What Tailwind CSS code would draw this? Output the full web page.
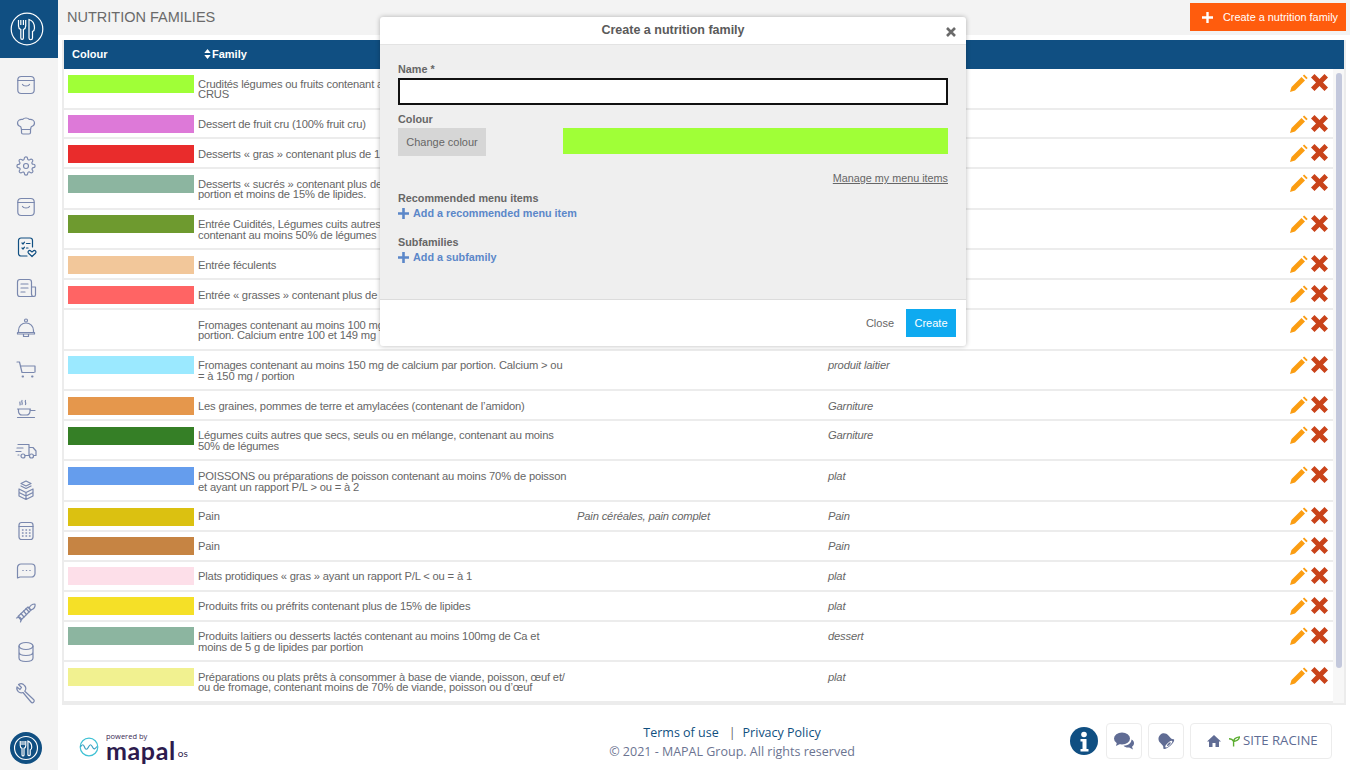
<!DOCTYPE html>
<html lang="en">
<head>
  <meta charset="UTF-8" />
  <meta name="viewport" content="width=device-width, initial-scale=1.0" />
  <title>Nutrition families</title>
  <script src="https://cdn.jsdelivr.net/npm/@tailwindcss/browser@4"></script>
</head>
<body class="bg-white text-[#666] font-['Liberation_Sans',sans-serif] overflow-hidden">
  <div class="relative flex w-[1350px] h-[770px] overflow-hidden">

    <!-- sidebar -->
    <aside class="w-[58px] h-full shrink-0 bg-[#f3f3f3] flex flex-col items-center">
      <div class="w-full h-[58px] shrink-0 bg-[#104f82] flex items-center justify-center pr-[4px]">
        <svg width="34" height="34" viewBox="0 0 34 34" fill="none" stroke="#fff" stroke-width="1.200">
          <circle cx="17" cy="17" r="15.800" />
          <path d="M8.500 8v6c0 2 1 3 2.300 3.500V26a1.300 1.300 0 0 0 2.600 0V17.500c1.300-.5 2.300-1.500 2.300-3.500V8M10.800 8v5M13.400 8v5" />
          <path d="M19 7.500c3.500 1 5.500 4 5.500 8.500 0 2-.7 3-2 3.500V26a1.700 1.700 0 0 1-3.500 0z" />
        </svg>
      </div>
      <div class="flex flex-col items-center gap-[16.500px] mt-[15px] mr-[6px] text-[#7a88ae]">
        <svg class="block" width="24" height="24" viewBox="0 0 24 24" fill="none" stroke="currentColor" stroke-width="1.200" stroke-linejoin="round" stroke-linecap="round"><rect x="3.800" y="3.500" width="16.400" height="17" rx="3.500"/><path d="M3.800 7.500h16.400M8.500 11.500c1 2 6 2 7 0"/></svg>
        <svg class="block" width="24" height="24" viewBox="0 0 24 24" fill="none" stroke="currentColor" stroke-width="1.200" stroke-linejoin="round" stroke-linecap="round"><path d="M7.500 15.500 6.800 12.800C4.500 12 3.500 10.500 3.500 9c0-2.500 2.500-4 5-3.500C9.500 4.500 10.500 4 12 4s2.500.5 3.500 1.500c2.500-.5 5 1 5 3.500 0 1.500-1 3-3.300 3.800l-.7 2.700z"/><path d="M7.500 15.500v3a1.500 1.500 0 0 0 1.500 1.500h6a1.500 1.500 0 0 0 1.500-1.500v-3"/></svg>
        <svg class="block" width="24" height="24" viewBox="-2.500 -2.500 29 29" fill="none" stroke="currentColor" stroke-width="1.400" stroke-linejoin="round" stroke-linecap="round"><circle cx="12" cy="12" r="3"/><path d="M19.400 15a1.650 1.650 0 0 0 .33 1.820l.06.06a2 2 0 1 1-2.830 2.830l-.06-.06a1.650 1.650 0 0 0-2.820 1.170V21a2 2 0 1 1-4 0v-.09a1.650 1.650 0 0 0-2.820-1.170l-.06.06a2 2 0 1 1-2.830-2.830l.06-.06a1.650 1.650 0 0 0-1.170-2.820H3a2 2 0 1 1 0-4h.09a1.650 1.650 0 0 0 1.170-2.820l-.06-.06a2 2 0 1 1 2.830-2.830l.06.06a1.650 1.650 0 0 0 2.820-1.170V3a2 2 0 1 1 4 0v.09a1.650 1.650 0 0 0 2.820 1.170l.06-.06a2 2 0 1 1 2.830 2.830l-.06.06a1.650 1.650 0 0 0 1.170 2.820H21a2 2 0 1 1 0 4h-.09a1.650 1.650 0 0 0-1.510 1z"/></svg>
        <svg class="block" width="24" height="24" viewBox="0 0 24 24" fill="none" stroke="currentColor" stroke-width="1.200" stroke-linejoin="round" stroke-linecap="round"><rect x="3.800" y="3.500" width="16.400" height="17" rx="3.500"/><path d="M3.800 7.500h16.400M8.500 11.500c1 2 6 2 7 0"/></svg>
        <svg class="block" width="24" height="24" viewBox="0 0 24 24" fill="none" stroke="#104f82" stroke-width="1.200" stroke-linejoin="round" stroke-linecap="round"><path d="M13 21H7a2.500 2.500 0 0 1-2.500-2.500v-13A2.500 2.500 0 0 1 7 3h9a2.500 2.500 0 0 1 2.500 2.500V12"/><path d="M8 8l1 1 1.500-1.800M8 13l1 1 1.500-1.800M12.500 8.500H16M12.500 13H14"/><path d="M18 21.500l-3.500-3.300c-1.500-1.500.8-3.700 2.300-2.200l1.200 1 1.200-1c1.500-1.500 3.800.7 2.300 2.200z"/></svg>
        <svg class="block" width="24" height="24" viewBox="0 0 24 24" fill="none" stroke="currentColor" stroke-width="1.200" stroke-linejoin="round" stroke-linecap="round"><path d="M18 20.500H6A2.500 2.500 0 0 1 3.500 18V6A2.500 2.500 0 0 1 6 3.500h9A2.500 2.500 0 0 1 17.500 6v12a2.500 2.500 0 0 0 2.500 2.500 1.800 1.800 0 0 0 1.500-1.800V11h-4"/><path d="M7 8h7M7 12h7M7 16h4"/></svg>
        <svg class="block" width="24" height="24" viewBox="0 0 24 24" fill="none" stroke="currentColor" stroke-width="1.200" stroke-linejoin="round" stroke-linecap="round"><circle cx="12" cy="4.500" r="1.500"/><path d="M4.500 16.500v-2a7.500 7.500 0 0 1 15 0v2zM3.500 16.500h17v1.500h-17zM9.500 18v2.500h5V18"/></svg>
        <svg class="block" width="24" height="24" viewBox="0 0 24 24" fill="none" stroke="currentColor" stroke-width="1.200" stroke-linejoin="round" stroke-linecap="round"><path d="M3 5h2.500l2.500 10.500h12M6.300 9h14.700v6"/><path d="M8.500 19.500h.6M18 19.500h.6" stroke-width="1.800"/></svg>
        <svg class="block" width="24" height="24" viewBox="0 0 24 24" fill="none" stroke="currentColor" stroke-width="1.200" stroke-linejoin="round" stroke-linecap="round"><path d="M3.500 20.500h17M4.500 12h11.500v2.500a3.500 3.500 0 0 1-3.500 3.500H8a3.500 3.500 0 0 1-3.500-3.500zM3.500 12h13M16 13.500h5M8 3.500c-1 1.500 1 2 0 4M11.500 3.500c-1 1.500 1 2 0 4M6 5c-.7 1 .7 1.500 0 3"/></svg>
        <svg class="block" width="24" height="24" viewBox="0 0 24 24" fill="none" stroke="currentColor" stroke-width="1.200" stroke-linejoin="round" stroke-linecap="round"><path d="M4 6.500h11v11h-4M15 9.500h4l3 3.500v4.500h-2.500M3 10h6M2 13.500h5M4 17h1"/><circle cx="9" cy="18" r="2"/><circle cx="17.500" cy="18" r="2"/></svg>
        <svg class="block" width="24" height="24" viewBox="0 0 24 24" fill="none" stroke="currentColor" stroke-width="1.200" stroke-linejoin="round" stroke-linecap="round"><path d="M12 3l5 2.500-5 2.500-5-2.500zM7 8l5 2.500L17 8M5 11l7 3.500 7-3.500M5 11v7l7 3.500 7-3.500v-7M12 14.500v7M5 14.500l7 3.500 7-3.500"/></svg>
        <svg class="block" width="24" height="24" viewBox="0 0 24 24" fill="none" stroke="currentColor" stroke-width="1.200" stroke-linejoin="round" stroke-linecap="round"><rect x="5" y="3.500" width="14" height="17" rx="2.500"/><path d="M5 7.500h14"/><path d="M8.500 11h.5M12 11h.5M15.500 11h.5M8.500 14h.5M12 14h.5M15.500 14h.5M8.500 17h.5M12 17h.5M15.500 17h.5" stroke-width="1.500"/></svg>
        <svg class="block" width="24" height="24" viewBox="0 0 24 24" fill="none" stroke="currentColor" stroke-width="1.200" stroke-linejoin="round" stroke-linecap="round"><path d="M7 5h10.500a3.500 3.500 0 0 1 3.500 3.500v6a3.500 3.500 0 0 1-3.500 3.500H6l-2.500 1V8.500A3.500 3.500 0 0 1 7 5z"/><path d="M8.800 11.500h.4M12.300 11.500h.4M15.800 11.500h.4"/></svg>
        <svg class="block" width="24" height="24" viewBox="0 0 24 24" fill="none" stroke="currentColor" stroke-width="1.200" stroke-linejoin="round" stroke-linecap="round"><path d="M15 8.500c1-3 3.500-4.500 6-4.500 .5 2.500-1 5-4 6z"/><path d="M4 16.500 7 20l10-10-3-3z"/><path d="M7 13.500l3 3.500M9.500 11l3 3.500M12 8.500l3 3.500"/><path d="M2.500 18l3-1 2 2-1 3"/></svg>
        <svg class="block" width="24" height="24" viewBox="0 0 24 24" fill="none" stroke="currentColor" stroke-width="1.200" stroke-linejoin="round" stroke-linecap="round"><ellipse cx="12" cy="6" rx="7" ry="3.500"/><path d="M5 6v12c0 2 3 3.500 7 3.500s7-1.500 7-3.500V6M5 12c0 2 3 3.500 7 3.500s7-1.500 7-3.500"/></svg>
        <svg class="block" width="24" height="24" viewBox="0 0 24 24" fill="none" stroke="currentColor" stroke-width="1.200" stroke-linejoin="round" stroke-linecap="round"><path d="M10.500 4.500a4.500 4.500 0 0 0-6-1l3 3-1.500 2-3-2.500a4.500 4.500 0 0 0 6 5.500l8 9.500a1.800 1.800 0 0 0 2.800-2.300l-9-8.500a4.500 4.500 0 0 0-.3-5.700z"/></svg>
      </div>
      <div class="mt-auto mb-[6px] mr-[6px] w-8 h-8 rounded-full bg-[#104f82] flex items-center justify-center">
        <svg width="26" height="26" viewBox="0 0 34 34" fill="none" stroke="#fff" stroke-width="1.500">
          <circle cx="17" cy="17" r="15" />
          <path d="M9.500 8v6c0 2 1 3 2.300 3.500V26a1.300 1.300 0 0 0 2.600 0V17.500c1.300-.5 2.300-1.500 2.300-3.500V8M11.800 8v5M14.400 8v5" />
          <path d="M19.500 8c3 1 5 4 5 8 0 2-.7 3-2 3.500V26a1.700 1.700 0 0 1-3 0z" />
        </svg>
      </div>
    </aside>

    <main class="flex-1 flex flex-col min-w-0">
      <!-- page title -->
      <header class="h-[35px] shrink-0 bg-[#f3f3f3] flex justify-between pl-[9px] pr-[4px]">
        <h1 class="text-[14.500px] leading-[35px] text-[#6a6a6a]">NUTRITION FAMILIES</h1>
        <button class="mt-[3px] w-[156px] h-[28px] bg-[#ff5c0d] text-white text-[10.900px] flex items-center whitespace-nowrap">
          <svg class="ml-[12px] mr-[10px]" width="11" height="11" viewBox="0 0 12 12" fill="#fff"><path d="M4.700 0h2.600v4.700H12v2.600H7.300V12H4.700V7.300H0V4.700h4.700z"/></svg>
          Create a nutrition family
        </button>
      </header>

      <!-- table -->
      <section class="ml-[4px] mr-[4px] mt-[5px] h-[665px] border-x-2 border-b-2 border-[#ececec] relative overflow-hidden">
        <div class="-mx-[2px] h-[29px] pb-[1px] bg-[#104f82] text-white font-bold text-[11px] flex items-center">
          <span class="pl-[10px] w-[142px]">Colour</span>
          <span class="flex items-center gap-[1px]">
            <svg width="7" height="10" viewBox="0 0 7 11" fill="#fff"><path d="M3.500 0 7 4.500H0zM3.500 11 0 6.500h7z"/></svg>Family
          </span>
        </div>
        <div id="rows" class="text-[11.200px] tracking-[-0.17px] leading-[10.700px] pr-[11px]"></div>
        <div class="absolute right-0 top-[29px] bottom-0 w-[11px] bg-[#f7f7f7]">
          <div class="ml-auto mr-[2px] mt-[4px] w-[6px] h-[595px] rounded-full bg-[#c3c8dc]"></div>
        </div>
      </section>

      <!-- footer -->
      <footer class="flex-1 relative">
        <div class="absolute left-[21px] top-[29px] flex items-center gap-[7px]">
          <svg width="20" height="20" viewBox="0 0 20 20" fill="none" stroke="#3fc1d4" stroke-width="1.200"><circle cx="10" cy="10" r="8.800"/><path d="M1.500 10c1.500-3 3-3 4 0s2.500 3 4 0 2.500-3 4 0 2.500 2 4.500-.5" stroke="#3a9fc0"/></svg>
          <div class="flex flex-col -mt-[2px]">
            <div class="text-[7.500px] leading-[8px] text-[#3b2a55] font-['Open_Sans',sans-serif]">powered by</div>
            <div class="flex items-end">
              <span class="text-[25px] leading-[20px] font-bold tracking-[0.600px] text-[#2d1b4e] font-['Lato',sans-serif]">mapal</span>
              <span class="text-[10px] leading-[14px] ml-[2px] text-[#2d1b4e] font-['Lato',sans-serif]">os</span>
            </div>
          </div>
        </div>
        <div class="absolute left-[674px] top-[18px] -translate-x-[50%] text-center font-['Open_Sans',sans-serif] text-[12.500px] whitespace-nowrap">
          <div class="leading-[19px] text-[#10507f]"><span>Terms of use</span><span class="ml-[10px] mr-[7px] text-[#666]">|</span><span>Privacy Policy</span></div>
          <div class="leading-[19px] text-[#6b7491]">© 2021 - MAPAL Group. All rights reserved</div>
        </div>
        <div class="absolute right-[18px] top-[18px] flex items-center gap-[6px]">
          <svg class="mr-[2px]" width="28" height="28" viewBox="0 0 28 28"><circle cx="14" cy="14" r="14" fill="#104f82"/><circle cx="14" cy="7.500" r="2.800" fill="#fff"/><path d="M10.500 12h6v10h2v2.500h-8V22h2v-7.500h-2z" fill="#fff"/></svg>
          <div class="w-[36px] h-[36px] border border-[#ececec] rounded-[4px] flex items-center justify-center">
            <svg width="20" height="18" viewBox="0 0 20 18" fill="#606c94"><ellipse cx="8" cy="6.500" rx="8" ry="6"/><path d="M3 10l-1 4 5-2.500z"/><path d="M17.500 7.500c2 1 2.500 2.500 2.500 3.800 0 1.500-.8 2.700-2 3.500l1 2.700-3.800-2c-2.500.3-4.500-.5-5.700-1.800 4.500 0 8-2.700 8-6.200z"/></svg>
          </div>
          <div class="w-[36px] h-[36px] border border-[#ececec] rounded-[4px] flex items-center justify-center">
            <svg width="18" height="18" viewBox="0 0 18 18"><g transform="rotate(-42 9 9)"><path d="M9 .5c3.500 0 5.500 2.800 5.500 6v4c0 .8 1 1.500 1.500 2.500 0 1.500-3 2.500-7 2.500s-7-1-7-2.500c.5-1 1.500-1.700 1.500-2.500v-4C3.500 3.300 5.500.5 9 .5z" fill="#606c94"/><ellipse cx="9" cy="13.200" rx="4.500" ry="1.500" fill="#fff"/><ellipse cx="9" cy="13.300" rx="2.500" ry=".8" fill="#606c94"/></g></svg>
          </div>
          <div class="w-[142px] h-[36px] border border-[#ececec] rounded-[4px] flex items-center pl-[16px] text-[13.200px] text-[#606c94] font-['Open_Sans',sans-serif] whitespace-nowrap">
            <svg width="14" height="14" viewBox="0 0 14 14" fill="#606c94"><path d="M7 1 0 7.500h2V13h3.500V9h3v4H12V7.500h2z"/></svg>
            <svg class="ml-[8px] mr-[3px]" width="11" height="12" viewBox="0 0 12 12" fill="none" stroke="#5cae32" stroke-width="1.500"><path d="M5 12V7C5 4 7 2 11.500 1.500 11 4 9 6 5 6.500 4 4.500 2.500 3.500 0 3.500"/></svg>
            SITE RACINE
          </div>
        </div>
      </footer>
    </main>

    <!-- modal -->
    <div class="absolute left-[380px] top-[17px] w-[586px] h-[329px] rounded-[3px] bg-white shadow-[0_0_5px_rgba(0,0,0,0.28)] flex flex-col overflow-hidden">
      <div class="h-[28px] shrink-0 border-b border-[#e3e3e3] flex items-center justify-center relative">
        <h2 class="text-[12.500px] font-bold text-[#5a5a5a]">Create a nutrition family</h2>
        <svg class="absolute right-[10px] top-[10px]" width="10" height="10" viewBox="0 0 10 10" stroke="#6a6a6a" stroke-width="2.600"><path d="M1 1l8 8M9 1 1 9"/></svg>
      </div>
      <div class="flex-1 bg-[#efefef] px-[18px] pt-[18px] text-[10.800px] border-b border-[#dcdcdc]">
        <div class="font-bold leading-[13px] text-[#666]">Name *</div>
        <div class="mt-[2px] h-[27px] bg-white border-2 border-[#111]"></div>
        <div class="mt-[8px] font-bold leading-[13px] text-[#666]">Colour</div>
        <div class="mt-[2px] flex justify-between">
          <button class="w-[88px] h-[28px] bg-[#d6d6d6] text-[#666] text-[11px]">Change colour</button>
          <div class="w-[385px] h-[26px] bg-[#a0ff37]"></div>
        </div>
        <div class="mt-[16px] text-right leading-[13px] underline text-[#666]">Manage my menu items</div>
        <div class="mt-[7px] font-bold leading-[13px] text-[#666]">Recommended menu items</div>
        <div class="mt-[2px] flex items-center font-bold leading-[13px] text-[#5b87c9]">
          <svg class="mr-[4px]" width="11" height="11" viewBox="0 0 11 11" fill="#5b87c9"><path d="M4.200 0h2.600v4.200H11v2.600H6.800V11H4.200V6.800H0V4.200h4.200z"/></svg>Add a recommended menu item
        </div>
        <div class="mt-[16px] font-bold leading-[13px] text-[#666]">Subfamilies</div>
        <div class="mt-[2px] flex items-center font-bold leading-[13px] text-[#5b87c9]">
          <svg class="mr-[4px]" width="11" height="11" viewBox="0 0 11 11" fill="#5b87c9"><path d="M4.200 0h2.600v4.200H11v2.600H6.800V11H4.200V6.800H0V4.200h4.200z"/></svg>Add a subfamily
        </div>
      </div>
      <div class="h-[46px] shrink-0 flex items-center justify-end pr-[10px] text-[11px]">
        <span class="text-[#666]">Close</span>
        <button class="ml-[12px] w-[50px] h-[28px] bg-[#0eaaf0] text-white">Create</button>
      </div>
    </div>
  </div>

  <script>
    // [colour, family, recommended, menu item]
    const families = [
      ['#a0ff37', 'Crudités légumes ou fruits contenant au moins 50% de fruits<br>CRUS', '', ''],
      ['#dd79d8', 'Dessert de fruit cru (100% fruit cru)', '', ''],
      ['#e92c2c', 'Desserts « gras » contenant plus de 15% de lipides', '', ''],
      ['#8cb5a0', 'Desserts « sucrés » contenant plus de 20g de glucides par<br>portion et moins de 15% de lipides.', '', ''],
      ['#6e9a2f', 'Entrée Cuidités, Légumes cuits autres que secs, seuls ou<br>contenant au moins 50% de légumes', '', ''],
      ['#f2c79a', 'Entrée féculents', '', ''],
      ['#ff6464', 'Entrée « grasses » contenant plus de 15% de lipides', '', ''],
      ['', 'Fromages contenant au moins 100 mg de calcium par<br>portion. Calcium entre 100 et 149 mg', '', ''],
      ['#9be9ff', 'Fromages contenant au moins 150 mg de calcium par portion. Calcium &gt; ou<br>= à 150 mg / portion', '', 'produit laitier'],
      ['#e5974c', 'Les graines, pommes de terre et amylacées (contenant de l’amidon)', '', 'Garniture'],
      ['#357f26', 'Légumes cuits autres que secs, seuls ou en mélange, contenant au moins<br>50% de légumes', '', 'Garniture'],
      ['#659ded', 'POISSONS ou préparations de poisson contenant au moins 70% de poisson<br>et ayant un rapport P/L &gt; ou = à 2', '', 'plat'],
      ['#dbc111', 'Pain', 'Pain céréales, pain complet', 'Pain'],
      ['#c68443', 'Pain', '', 'Pain'],
      ['#fddfe9', 'Plats protidiques « gras » ayant un rapport P/L &lt; ou = à 1', '', 'plat'],
      ['#f5e027', 'Produits frits ou préfrits contenant plus de 15% de lipides', '', 'plat'],
      ['#8cb5a0', 'Produits laitiers ou desserts lactés contenant au moins 100mg de Ca et<br>moins de 5 g de lipides par portion', '', 'dessert'],
      ['#f1f190', 'Préparations ou plats prêts à consommer à base de viande, poisson, œuf et/<br>ou de fromage, contenant moins de 70% de viande, poisson ou d’œuf', '', 'plat']
    ];
    const pencil = '<svg width="18" height="18" viewBox="0 0 18 18" fill="#fb9d12"><path d="M0 18l1.500-5L11.500 3l3.500 3.500L5 16.500z"/><path d="M12.800 1.800l1.400-1.400 3.500 3.500-1.400 1.400z"/></svg>';
    const cross = '<svg width="17" height="17" viewBox="0 0 17 17" fill="#c9431a"><path d="M3.500 0 8.500 5l5-5L17 3.500l-5 5 5 5-3.500 3.500-5-5-5 5L0 13.500l5-5-5-5z"/></svg>';
    document.getElementById('rows').innerHTML = families.map(([colour, family, rec, item]) => {
      const two = family.includes('<br>');
      return `<div class="${two ? 'h-[40.500px]' : 'h-[29.900px]'} border-b-2 border-[#ececec] flex items-start">
        <div class="ml-[4px] mt-[5.600px] w-[126px] h-[18px] shrink-0" style="background:${colour || 'transparent'}"></div>
        <div class="ml-[4px] w-[379px] shrink-0 whitespace-nowrap mt-[9.500px]">${family}</div>
        <div class="w-[251px] shrink-0 italic mt-[9.500px]">${rec}</div>
        <div class="flex-1 italic mt-[9.500px]">${item}</div>
        <div class="flex gap-[3px] mr-[5px] mt-[5px]">${pencil}${cross}</div>
      </div>`;
    }).join('');
  </script>
</body>
</html>
